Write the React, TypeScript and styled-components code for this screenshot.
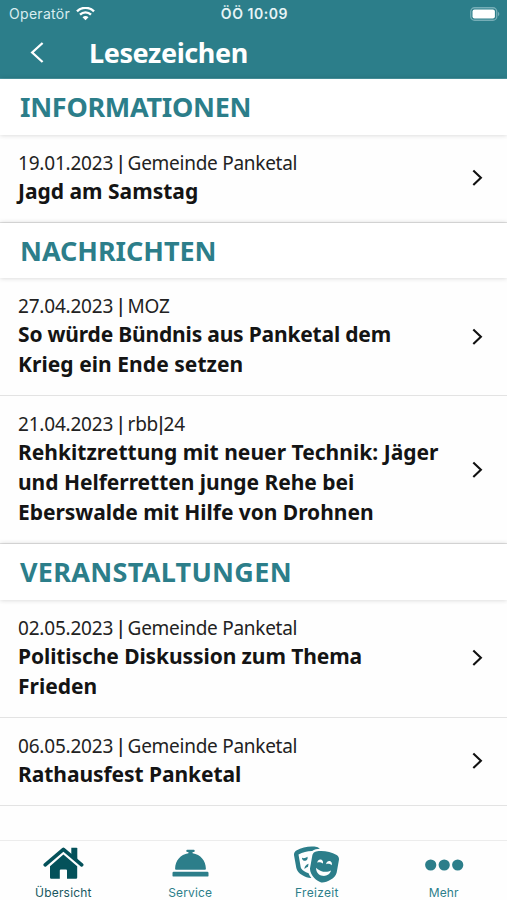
import React from 'react';
import styled, { createGlobalStyle } from 'styled-components';
import { FaTheaterMasks } from 'react-icons/fa';

const teal = '#2c7e8a';
const deepTeal = '#04515a';

const GlobalStyle = createGlobalStyle`
  *, *::before, *::after { box-sizing: border-box; }
  body { margin: 0; background: #fff; }
`;

const Screen = styled.div`
  display: flex;
  flex-direction: column;
  width: 507px;
  height: 900px;
  overflow: hidden;
  background: #fefefe;
  color: #141414;
  font-family: 'Noto Sans', 'Open Sans', sans-serif;
`;

const Header = styled.header`
  flex: none;
  height: 79px;
  background: ${teal};
  color: #fff;
  border-bottom: 1px solid #4b98a3;
`;

const StatusBar = styled.div`
  display: grid;
  grid-template-columns: 1fr auto 1fr;
  align-items: center;
  height: 27px;
  padding: 0 7px 0 9px;
  font-family: Inter, sans-serif;
  font-size: 14px;
  line-height: 27px;
`;

const Carrier = styled.div`
  display: flex;
  align-items: center;
  gap: 6px;
  color: #d9edf0;
  letter-spacing: 0.3px;
`;

const Clock = styled.div`
  font-weight: 600;
  color: #e6f4f6;
  letter-spacing: 0.55px;
`;

const BatterySlot = styled.div`
  display: flex;
  justify-content: flex-end;
`;

const TitleBar = styled.div`
  display: flex;
  align-items: center;
  height: 51px;
  padding-left: 30px;
`;

const BackButton = styled.button`
  display: flex;
  width: 59px;
  padding: 0;
  border: 0;
  background: none;
  color: inherit;
`;

const PageTitle = styled.h1`
  margin: 0;
  font-size: 27px;
  font-weight: 700;
  line-height: 36px;
  letter-spacing: -0.4px;
`;

const List = styled.main`
  flex: 1;
  min-height: 0;
`;

const SectionTitle = styled.h2<{ $spacing: number }>`
  height: 55.5px;
  margin: 0;
  padding-left: 20px;
  position: relative;
  background: #fff;
  box-shadow: 0 0 5px rgba(0, 0, 0, 0.18);
  clip-path: inset(-5px 0 -5px 0);
  color: ${teal};
  font-size: 27px;
  font-weight: 700;
  line-height: 56px;
  letter-spacing: ${(p) => p.$spacing}px;
`;

const Entry = styled.article`
  display: flex;
  align-items: center;
  justify-content: space-between;
  padding: 16.25px 24px 15.75px 18px;
  border-bottom: 1px solid #e3e3e3;
`;

const Meta = styled.div`
  display: flex;
  height: 25px;
  font-size: 19px;
  line-height: 25px;
  white-space: pre;
  color: #222;
`;

const MetaDate = styled.span`
  width: 100px;
  letter-spacing: -0.2px;
`;

const MetaSource = styled.span`
  display: flex;
  margin-left: 4px;
  letter-spacing: -0.27px;
`;

const Bar = styled.span`
  display: flex;
  justify-content: center;
  width: 5.6px;
  font-family: 'Liberation Sans', sans-serif;
  font-size: 21px;
  line-height: 24px;
`;

const Headline = styled.h3`
  margin: 0;
  font-size: 21px;
  font-weight: 700;
  line-height: 30px;
`;

const HeadlineRow = styled.span<{ $spacing: number }>`
  display: block;
  white-space: nowrap;
  letter-spacing: ${(p) => p.$spacing}px;
`;

const TabBar = styled.nav`
  flex: none;
  display: grid;
  grid-template-columns: repeat(4, 1fr);
  height: 60px;
  border-top: 1px solid #ececec;
  background: #fefefe;
`;

const Tab = styled.a<{ $active?: boolean }>`
  display: flex;
  flex-direction: column;
  align-items: center;
  color: ${(p) => (p.$active ? deepTeal : teal)};
`;

const TabIcon = styled.span<{ $raised?: boolean }>`
  display: flex;
  align-items: center;
  height: 45px;
  padding-top: ${(p) => (p.$raised ? 0 : 2)}px;
`;

const TabLabel = styled.span<{ $spacing: number }>`
  color: ${teal};
  font-family: Inter, sans-serif;
  font-size: 12px;
  font-weight: 400;
  line-height: 14px;
  letter-spacing: ${(p) => p.$spacing}px;
`;

const HomeLabel = styled(TabLabel)`
  color: #17575f;
`;

const WifiIcon = () => (
  <svg width="19" height="14" viewBox="0 0 19 14" fill="none" stroke="#fff" strokeWidth="2.4">
    <path d="M1 4.4C5.8-.3 13.2-.3 18 4.4M4 7.6c3.1-3 7.9-3 11 0" />
    <path d="M9.5 13.2 6.5 10.2c1.7-1.6 4.3-1.6 6 0z" fill="#fff" stroke="none" />
  </svg>
);

const BatteryIcon = () => (
  <svg width="30" height="14" viewBox="0 0 30 14">
    <rect x=".75" y=".75" width="26" height="12.5" rx="3.8" fill="none" stroke="#76aeb7" strokeWidth="1.3" />
    <rect x="2.5" y="2.5" width="22.4" height="9" rx="2" fill="#fff" />
    <path d="M28 4.8c1.8.8 1.8 3.6 0 4.4z" fill="#76aeb7" />
  </svg>
);

const BackIcon = () => (
  <svg width="14" height="22" viewBox="0 0 14 22" fill="none" stroke="currentColor" strokeWidth="2.3">
    <path d="M12.6 1 2.2 10.5 12.6 20" />
  </svg>
);

const Chevron = () => (
  <svg width="11" height="18" viewBox="0 0 11 18" fill="none" stroke="#111" strokeWidth="2.1">
    <path d="M1.3 1.5 8.9 8.8l-7.6 7.3" />
  </svg>
);

const HouseIcon = () => (
  <svg width="41" height="33" viewBox="0 0 41 33" fill="currentColor">
    <path d="M28.3.7h5.2q.8 0 .8.8v12.7l-6-5.2z" />
    <path
      d="M2.2 17.8 20.4 2.3l18.3 15.5"
      fill="none"
      stroke="currentColor"
      strokeWidth="3.6"
      strokeLinecap="round"
      strokeLinejoin="round"
    />
    <path d="M20.4 7.6 34.2 19.3v11.2q0 1.2-1.2 1.2h-9v-8.2q0-1-1-1h-5.2q-1 0-1 1v8.2H8.2Q7 31.7 7 30.5V19.3z" />
  </svg>
);

const BellIcon = () => (
  <svg width="37" height="29" viewBox="0 0 37 29" fill="currentColor">
    <path d="M15.3.7h6.4q1 0 1 1v.4q0 1-1 1h-1.1v1.2C28.6 5.3 33.7 11.8 33.9 19.8q0 .9-.9.9H4q-.9 0-.9-.9C3.3 11.8 8.4 5.3 16.4 4.3V3.1h-1.1q-1 0-1-1v-.4q0-1 1-1z" />
    <rect x=".5" y="22.7" width="36" height="4.9" rx="1.2" />
  </svg>
);

const DotsIcon = () => (
  <svg width="40" height="12" viewBox="0 0 40 12" fill="currentColor">
    <circle cx="6.7" cy="6" r="5.6" />
    <circle cx="20.2" cy="6" r="5.6" />
    <circle cx="33.7" cy="6" r="5.6" />
  </svg>
);

type Line = [text: string, spacing: number];
type Item = { date: string; source: string[]; lines: Line[] };
type Section = { title: string; spacing: number; items: Item[] };

const sections: Section[] = [
  {
    title: 'INFORMATIONEN',
    spacing: -0.3,
    items: [{ date: '19.01.2023', source: ['Gemeinde Panketal'], lines: [['Jagd am Samstag', 0]] }],
  },
  {
    title: 'NACHRICHTEN',
    spacing: -0.05,
    items: [
      {
        date: '27.04.2023',
        source: ['MOZ'],
        lines: [['So würde Bündnis aus Panketal dem', -0.19], ['Krieg ein Ende setzen', 0.05]],
      },
      {
        date: '21.04.2023',
        source: ['rbb', '24'],
        lines: [
          ['Rehkitzrettung mit neuer Technik: Jäger', 0.02],
          ['und Helferretten junge Rehe bei', -0.03],
          ['Eberswalde mit Hilfe von Drohnen', -0.04],
        ],
      },
    ],
  },
  {
    title: 'VERANSTALTUNGEN',
    spacing: 0.3,
    items: [
      {
        date: '02.05.2023',
        source: ['Gemeinde Panketal'],
        lines: [['Politische Diskussion zum Thema', -0.09], ['Frieden', 0]],
      },
      { date: '06.05.2023', source: ['Gemeinde Panketal'], lines: [['Rathausfest Panketal', -0.06]] },
    ],
  },
];

export default function App() {
  return (
    <Screen>
      <GlobalStyle />
      <Header>
        <StatusBar>
          <Carrier>
            Operatör
            <WifiIcon />
          </Carrier>
          <Clock>ÖÖ 10:09</Clock>
          <BatterySlot>
            <BatteryIcon />
          </BatterySlot>
        </StatusBar>
        <TitleBar>
          <BackButton aria-label="Zurück">
            <BackIcon />
          </BackButton>
          <PageTitle>Lesezeichen</PageTitle>
        </TitleBar>
      </Header>
      <List>
        {sections.map((section) => (
          <section key={section.title}>
            <SectionTitle $spacing={section.spacing}>{section.title}</SectionTitle>
            {section.items.map((item) => (
              <Entry key={item.date}>
                <div>
                  <Meta>
                    <MetaDate>{item.date}</MetaDate>
                    <Bar>|</Bar>
                    <MetaSource>
                      {item.source.map((part, i) => (
                        <React.Fragment key={part}>
                          {i > 0 && <Bar>|</Bar>}
                          {part}
                        </React.Fragment>
                      ))}
                    </MetaSource>
                  </Meta>
                  <Headline>
                    {item.lines.map(([text, spacing]) => (
                      <HeadlineRow key={text} $spacing={spacing}>
                        {text}
                      </HeadlineRow>
                    ))}
                  </Headline>
                </div>
                <Chevron />
              </Entry>
            ))}
          </section>
        ))}
      </List>
      <TabBar>
        <Tab $active>
          <TabIcon $raised>
            <HouseIcon />
          </TabIcon>
          <HomeLabel $spacing={0.2}>Übersicht</HomeLabel>
        </Tab>
        <Tab>
          <TabIcon $raised>
            <BellIcon />
          </TabIcon>
          <TabLabel $spacing={0.15}>Service</TabLabel>
        </Tab>
        <Tab>
          <TabIcon>
            <FaTheaterMasks size={45} />
          </TabIcon>
          <TabLabel $spacing={0.3}>Freizeit</TabLabel>
        </Tab>
        <Tab>
          <TabIcon>
            <DotsIcon />
          </TabIcon>
          <TabLabel $spacing={0.1}>Mehr</TabLabel>
        </Tab>
      </TabBar>
    </Screen>
  );
}
